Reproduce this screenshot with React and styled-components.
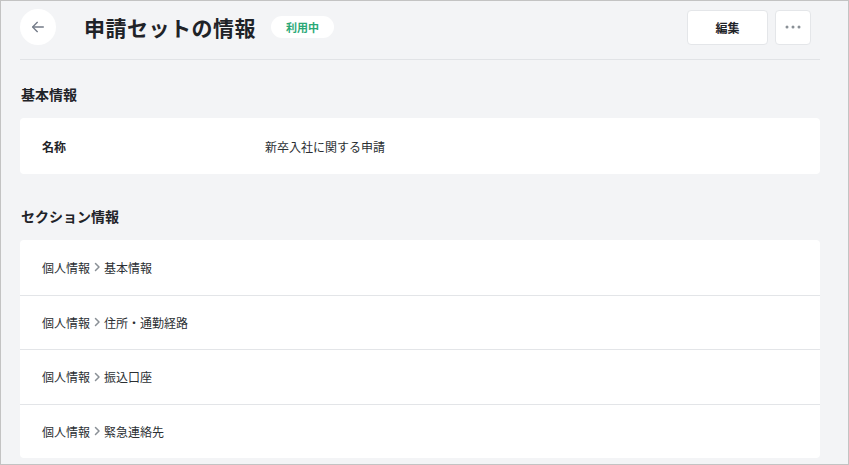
import React from "react";
import styled, { createGlobalStyle } from "styled-components";

const Global = createGlobalStyle`
  html, body { margin: 0; padding: 0; background: #f3f4f6; }
  body { font-family: "Noto Sans CJK JP", "Noto Sans", sans-serif; color: #1f2328; }
  * { box-sizing: border-box; }
`;

const Frame = styled.div`
  width: 849px;
  height: 465px;
  border: 1px solid #c3c3c3;
  background: #f3f4f6;
  padding: 8px 28px 0 19px;
  overflow: hidden;
`;

const Header = styled.header`
  display: flex;
  align-items: center;
  height: 36px;
  padding-right: 9px;
`;

const HeaderWrap = styled.div`
  border-bottom: 1px solid #e1e3e6;
  padding-bottom: 14px;
`;

const BackButton = styled.button`
  width: 36px;
  height: 36px;
  border-radius: 50%;
  border: none;
  background: #fff;
  display: flex;
  align-items: center;
  justify-content: center;
  padding: 0;
  margin-right: 28px;
  color: #747b88;
`;

const Title = styled.h1`
  margin: 0;
  font-size: 21px;
  font-weight: 700;
  color: #1f2328;
  line-height: 1;
  letter-spacing: 0.5px;
`;

const Badge = styled.span`
  margin-left: 15px;
  background: #fff;
  border-radius: 11px;
  height: 22px;
  padding: 0 15px;
  display: inline-flex;
  align-items: center;
  font-size: 11px;
  font-weight: 700;
  color: #2aa876;
`;

const Spacer = styled.div`
  flex: 1;
`;

const ActionButton = styled.button`
  height: 35px;
  width: ${(p) => p.$w}px;
  margin-left: ${(p) => p.$ml || 0}px;
  background: #fff;
  border: 1px solid #e4e6e9;
  border-radius: 4px;
  font-family: inherit;
  font-size: 12px;
  font-weight: 700;
  color: #1f2328;
  display: flex;
  align-items: center;
  justify-content: center;
  padding: 0;
`;

const SectionTitle = styled.h2`
  margin: 0;
  font-size: 14px;
  font-weight: 700;
  color: #1f2328;
  line-height: 20px;
  padding: ${(p) => p.$pt}px 0 14px 1px;
`;

const Card = styled.div`
  background: #fff;
  border-radius: 4px;
  overflow: hidden;
`;

const InfoRow = styled.div`
  display: grid;
  grid-template-columns: 223px 1fr;
  align-items: center;
  height: 56px;
  padding-left: 22px;
  font-size: 12px;
`;

const Label = styled.span`
  font-weight: 700;
  color: #1f2328;
`;

const Value = styled.span`
  color: #2b2f33;
`;

const ListRow = styled.div`
  display: flex;
  align-items: center;
  height: 54.5px;
  padding-left: 22px;
  font-size: 12px;
  color: #2b2f33;
  & + & {
    border-top: 1px solid #e3e5e8;
  }
`;

const Chevron = styled.span`
  display: inline-flex;
  margin: 0 3px 0 3px;
  color: #8a9096;
`;

const ArrowLeft = () => (
  <svg width="16" height="16" viewBox="0 0 24 24" fill="none" stroke="currentColor" strokeWidth="2" strokeLinecap="round" strokeLinejoin="round">
    <path d="M20 12H4.5" />
    <path d="M11 5l-7 7 7 7" />
  </svg>
);

const Dots = () => (
  <svg width="16" height="4" viewBox="0 0 16 4" fill="#8a9096">
    <circle cx="2" cy="2" r="1.5" />
    <circle cx="8" cy="2" r="1.5" />
    <circle cx="14" cy="2" r="1.5" />
  </svg>
);

const ChevronIcon = () => (
  <svg width="8" height="10" viewBox="0 0 8 10" fill="none" stroke="currentColor" strokeWidth="1.5" strokeLinecap="round" strokeLinejoin="round">
    <path d="M2.5 1.5L6 5 2.5 8.5" />
  </svg>
);

const sections = ["基本情報", "住所・通勤経路", "振込口座", "緊急連絡先"];

export default function App() {
  return (
    <>
      <Global />
      <Frame>
        <HeaderWrap>
          <Header>
            <BackButton aria-label="戻る">
              <ArrowLeft />
            </BackButton>
            <Title>申請セットの情報</Title>
            <Badge>利用中</Badge>
            <Spacer />
            <ActionButton $w={81}>編集</ActionButton>
            <ActionButton $w={36} $ml={7} aria-label="その他">
              <Dots />
            </ActionButton>
          </Header>
        </HeaderWrap>
        <SectionTitle $pt={24}>基本情報</SectionTitle>
        <Card>
          <InfoRow>
            <Label>名称</Label>
            <Value>新卒入社に関する申請</Value>
          </InfoRow>
        </Card>
        <SectionTitle $pt={32}>セクション情報</SectionTitle>
        <Card>
          {sections.map((s) => (
            <ListRow key={s}>
              個人情報
              <Chevron>
                <ChevronIcon />
              </Chevron>
              {s}
            </ListRow>
          ))}
        </Card>
      </Frame>
    </>
  );
}
